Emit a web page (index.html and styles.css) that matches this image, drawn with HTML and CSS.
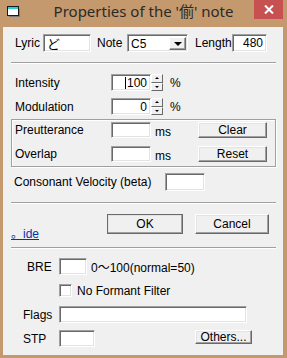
FILE: index.html
```html
<!DOCTYPE html>
<html lang="en">
<head>
    <meta charset="UTF-8">
    <title>Properties of the note</title>
    <link rel="stylesheet" href="styles.css">
</head>
<body>
    <div class="window">
        <div class="titlebar">
            <svg class="app-icon" width="13" height="11" viewBox="0 0 13 11">
                <rect x="0.5" y="0.5" width="11" height="9" fill="#fff" stroke="#1a1a1a"/>
                <rect x="1" y="1" width="10" height="2" fill="#22d0e0"/>
                <rect x="12" y="3" width="1" height="7" fill="#7a7a7a"/>
                <rect x="2" y="10" width="11" height="1" fill="#7a7a7a"/>
            </svg>
            <span class="title">Properties of the '偂' note</span>
            <div class="close">
                <svg width="10" height="9" viewBox="0 0 10 9">
                    <path d="M1 0.5 L9 8.5 M9 0.5 L1 8.5" stroke="#fff" stroke-width="2"/>
                </svg>
            </div>
        </div>

        <div class="client">
            <div class="row r-top">
                <span class="lbl lbl-lyric">Lyric</span>
                <div class="field f-lyric">ど</div>
                <span class="lbl lbl-note">Note</span>
                <div class="field f-select">
                    <span class="select-text">C5</span>
                    <div class="drop-btn"><i class="arrow-down"></i></div>
                </div>
                <span class="lbl lbl-length">Length</span>
                <div class="field f-length num">480</div>
            </div>

            <div class="sep sep1"></div>

            <div class="row r-int">
                <span class="lbl lbl-wide">Intensity</span>
                <div class="field f-num num"><span class="caret"></span>100</div>
                <div class="spin">
                    <div class="spin-btn"><i class="tri-up"></i></div>
                    <div class="spin-btn"><i class="tri-down"></i></div>
                </div>
                <span class="pct">%</span>
            </div>

            <div class="row r-mod">
                <span class="lbl lbl-wide">Modulation</span>
                <div class="field f-num num">0</div>
                <div class="spin">
                    <div class="spin-btn"><i class="tri-up"></i></div>
                    <div class="spin-btn"><i class="tri-down"></i></div>
                </div>
                <span class="pct">%</span>
            </div>

            <div class="group">
                <div class="row g-row">
                    <span class="lbl lbl-group">Preutterance</span>
                    <div class="field f-num"></div>
                    <span class="unit">ms</span>
                    <div class="btn b-small">Clear</div>
                </div>
                <div class="row g-row g-row2">
                    <span class="lbl lbl-group">Overlap</span>
                    <div class="field f-num"></div>
                    <span class="unit">ms</span>
                    <div class="btn b-small">Reset</div>
                </div>
            </div>

            <div class="row r-cons">
                <span class="lbl lbl-cons">Consonant Velocity (beta)</span>
                <div class="field f-num"></div>
            </div>

            <div class="sep sep2"></div>

            <div class="row r-btn">
                <a class="link" href="#">。ide</a>
                <div class="btn b-ok">OK</div>
                <div class="btn b-cancel">Cancel</div>
            </div>

            <div class="sep sep3"></div>

            <div class="row r-bre">
                <span class="lbl lbl-bre">BRE</span>
                <div class="field f-bre"></div>
                <span class="hint">0～100(normal=50)</span>
            </div>

            <div class="row r-chk">
                <div class="check"></div>
                <span class="chk-text">No Formant Filter</span>
            </div>

            <div class="row r-flags">
                <span class="lbl lbl-left">Flags</span>
                <div class="field f-flags"></div>
            </div>

            <div class="row r-stp">
                <span class="lbl lbl-left">STP</span>
                <div class="field f-stp"></div>
                <div class="btn b-others">Others...</div>
            </div>
        </div>
    </div>
</body>
</html>
```

FILE: styles.css
```css
body {
    margin: 0;
    width: 287px;
    height: 358px;
    background-color: #c4996d;
    font-family: "Liberation Sans", Arial, "Noto Sans CJK JP", sans-serif;
    font-size: 12px;
    color: #000;
    overflow: hidden;
}
.window {
    width: 287px;
    height: 358px;
}
.titlebar {
    position: relative;
    height: 27px;
    display: flex;
    justify-content: center;
}
.app-icon {
    position: absolute;
    left: 7px;
    top: 6px;
}
.title {
    font-family: "Noto Sans", "Noto Sans CJK JP", sans-serif;
    font-size: 15px;
    color: #2a2a2a;
    line-height: 22px;
    margin-top: 0;
}
.close {
    position: absolute;
    left: 254px;
    top: 0;
    width: 29px;
    height: 19px;
    background-color: #c75050;
    display: flex;
    align-items: center;
    justify-content: center;
}
.client {
    margin: 0 4px 0 3px;
    height: 328px;
    box-sizing: border-box;
    padding: 7px 7px 0 8px;
    background-color: #f0f0f0;
}
.row {
    display: flex;
    align-items: center;
}
.lbl {
    flex: none;
    white-space: nowrap;
}
.field {
    flex: none;
    box-sizing: border-box;
    height: 100%;
    background: #fff;
    border: 1px solid;
    border-color: #a0a0a0 #fff #fff #a0a0a0;
    box-shadow: inset 1px 1px 0 #696969, inset -1px -1px 0 #e3e3e3;
    padding: 0 3px;
    display: flex;
    align-items: center;
    white-space: nowrap;
}
.num {
    justify-content: flex-end;
}
.btn {
    flex: none;
    box-sizing: border-box;
    background: #f0f0f0;
    border: 1px solid;
    border-color: #fff #696969 #696969 #fff;
    box-shadow: inset -1px -1px 0 #a0a0a0, inset 1px 1px 0 #e3e3e3;
    display: flex;
    align-items: center;
    justify-content: center;
}
.sep {
    height: 0;
    border-top: 1px solid #a0a0a0;
    border-bottom: 1px solid #fff;
}

/* top row */
.r-top {
    height: 18px;
}
.lbl-lyric {
    margin-left: 4px;
    width: 28px;
}
.f-lyric {
    width: 48px;
    font-size: 13px;
}
.lbl-note {
    margin-left: 6px;
    width: 30px;
}
.f-select {
    width: 61px;
    padding: 2px 1px 1px 3px;
    justify-content: space-between;
}
.select-text {
    padding-top: 1px;
}
.drop-btn {
    box-sizing: border-box;
    width: 17px;
    height: 100%;
    background: #f0f0f0;
    border: 1px solid;
    border-color: #fff #696969 #696969 #fff;
    box-shadow: inset -1px -1px 0 #a0a0a0;
    display: flex;
    align-items: center;
    justify-content: center;
}
.arrow-down {
    width: 0;
    height: 0;
    border-left: 4px solid transparent;
    border-right: 4px solid transparent;
    border-top: 4px solid #000;
}
.lbl-length {
    margin-left: 7px;
    width: 37px;
}
.f-length {
    width: 35px;
}

.sep1 {
    margin-top: 10px;
}

/* intensity / modulation */
.r-int {
    margin-top: 10px;
    height: 17px;
}
.r-mod {
    margin-top: 7px;
    height: 17px;
}
.lbl-wide {
    margin-left: 4px;
    width: 96px;
}
.f-num {
    width: 40px;
}
.caret {
    width: 1px;
    height: 12px;
    background: #000;
    margin-right: 1px;
}
.spin {
    flex: none;
    width: 12px;
    height: 17px;
    display: flex;
    flex-direction: column;
}
.spin-btn {
    flex: 1;
    box-sizing: border-box;
    background: #f0f0f0;
    border: 1px solid;
    border-color: #fff #696969 #696969 #fff;
    display: flex;
    align-items: center;
    justify-content: center;
}
.tri-up {
    width: 0;
    height: 0;
    border-left: 2px solid transparent;
    border-right: 2px solid transparent;
    border-bottom: 2px solid #000;
}
.tri-down {
    width: 0;
    height: 0;
    border-left: 2px solid transparent;
    border-right: 2px solid transparent;
    border-top: 2px solid #000;
}
.pct {
    margin-left: 7px;
}

/* group box */
.group {
    margin-top: 4px;
    box-sizing: border-box;
    height: 48px;
    border: 1px solid #a0a0a0;
    box-shadow: inset 1px 1px 0 #fff, 1px 1px 0 #fff;
    padding-top: 2px;
}
.g-row {
    height: 16px;
}
.g-row2 {
    margin-top: 8px;
}
.lbl-group {
    margin-left: 3px;
    width: 96px;
}
.unit {
    margin-left: 4px;
    width: 43px;
    padding-top: 3px;
}
.b-small {
    width: 69px;
    height: 16px;
    padding-bottom: 1px;
}

/* consonant */
.r-cons {
    margin-top: 6px;
    height: 18px;
}
.lbl-cons {
    margin-left: 3px;
    width: 151px;
}

.sep2 {
    margin-top: 11px;
}

/* ok / cancel */
.r-btn {
    margin-top: 10px;
    height: 27px;
    align-items: flex-start;
}
.link {
    width: 96px;
    align-self: flex-end;
    color: #0033aa;
    text-decoration: underline;
    font-size: 12px;
    line-height: 12px;
    margin-bottom: 1px;
}
.b-ok {
    width: 76px;
    height: 20px;
    outline: 1px solid #6a6a6a;
    outline-offset: -1px;
    border-color: #e8e8e8 #404040 #404040 #e8e8e8;
}
.b-cancel {
    margin-left: 12px;
    width: 74px;
    height: 20px;
}

.sep3 {
    margin-top: 6px;
}

/* lower section */
.r-bre {
    margin-top: 9px;
    height: 17px;
}
.lbl-bre {
    box-sizing: border-box;
    padding-left: 16px;
    width: 48px;
}
.f-bre {
    width: 28px;
}
.hint {
    margin-left: 4px;
}
.r-chk {
    margin-top: 9px;
    height: 13px;
}
.check {
    flex: none;
    box-sizing: border-box;
    margin-left: 48px;
    width: 13px;
    height: 13px;
    background: #fff;
    border: 1px solid;
    border-color: #a0a0a0 #fff #fff #a0a0a0;
    box-shadow: inset 1px 1px 0 #696969, inset -1px -1px 0 #e3e3e3;
}
.chk-text {
    margin-left: 5px;
}
.r-flags {
    margin-top: 9px;
    height: 17px;
}
.lbl-left {
    box-sizing: border-box;
    padding-left: 12px;
    width: 48px;
}
.f-flags {
    width: 188px;
}
.r-stp {
    margin-top: 7px;
    height: 17px;
    align-items: flex-start;
}
.r-stp .lbl-left {
    align-self: center;
}
.f-stp {
    width: 36px;
}
.b-others {
    margin-left: 100px;
    width: 57px;
    height: 14px;
    padding-bottom: 1px;
}
```
